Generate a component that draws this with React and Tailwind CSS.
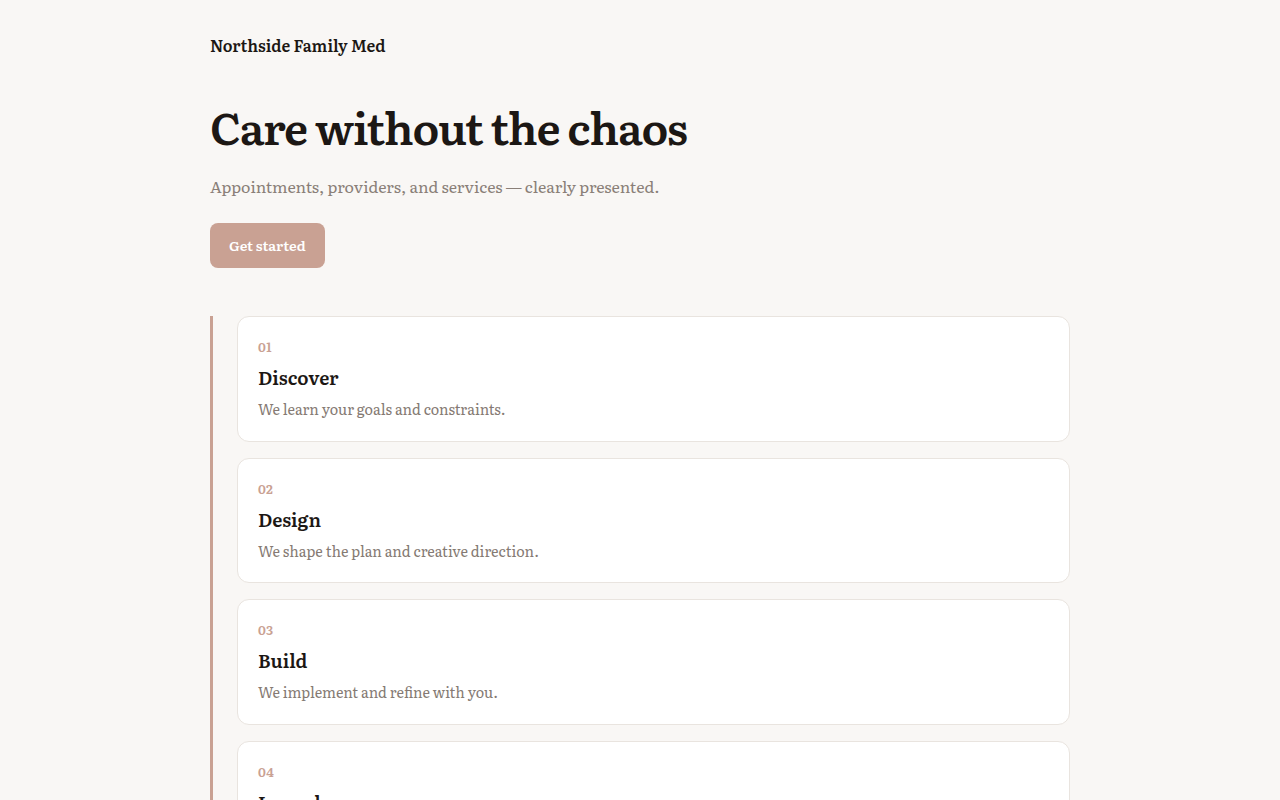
const steps = [
  { n: "01", title: "Discover", text: "We learn your goals and constraints." },
  { n: "02", title: "Design", text: "We shape the plan and creative direction." },
  { n: "03", title: "Build", text: "We implement and refine with you." },
  { n: "04", title: "Launch", text: "We ship, measure, and keep improving." },
];

export default function App() {
  return (
    <div
      className="min-h-screen bg-[#f9f7f5] text-[#1c1714]"
      style={{ fontFamily: '"Literata", "Source Serif 4", "Noto Serif", serif' }}
    >
      <div className="mx-auto w-[860px] pt-[33px] pb-16">
        <header className="text-[16px] font-semibold leading-6">
          Northside Family Med
        </header>

        <section className="mt-[41px]">
          <h1 className="text-[44.2px] font-semibold leading-[56px] tracking-[-0.025em]">
            Care without the chaos
          </h1>
          <p className="mt-[20px] text-[16px] leading-6 text-[#8a7f78]">
            Appointments, providers, and services — clearly presented.
          </p>
          <button className="mt-[25px] h-[45px] rounded-lg bg-[#c9a193] px-[19px] text-[14px] font-semibold text-white">
            Get started
          </button>
        </section>

        <ol className="mt-[48px] flex flex-col gap-4 border-l-[3px] border-[#c9a193] pl-6">
          {steps.map((s) => (
            <li
              key={s.n}
              className="rounded-xl border border-[#e9e4df] bg-white px-5 pt-5 pb-[20.5px]"
            >
              <div className="text-[13px] font-semibold leading-5 tracking-wide text-[#c9a193]">
                {s.n}
              </div>
              <h3 className="mt-[7px] text-[18.5px] font-semibold leading-[26px]">{s.title}</h3>
              <p className="mt-2 text-[14.4px] leading-[22px] text-[#857a73]">{s.text}</p>
            </li>
          ))}
        </ol>
      </div>
    </div>
  );
}
